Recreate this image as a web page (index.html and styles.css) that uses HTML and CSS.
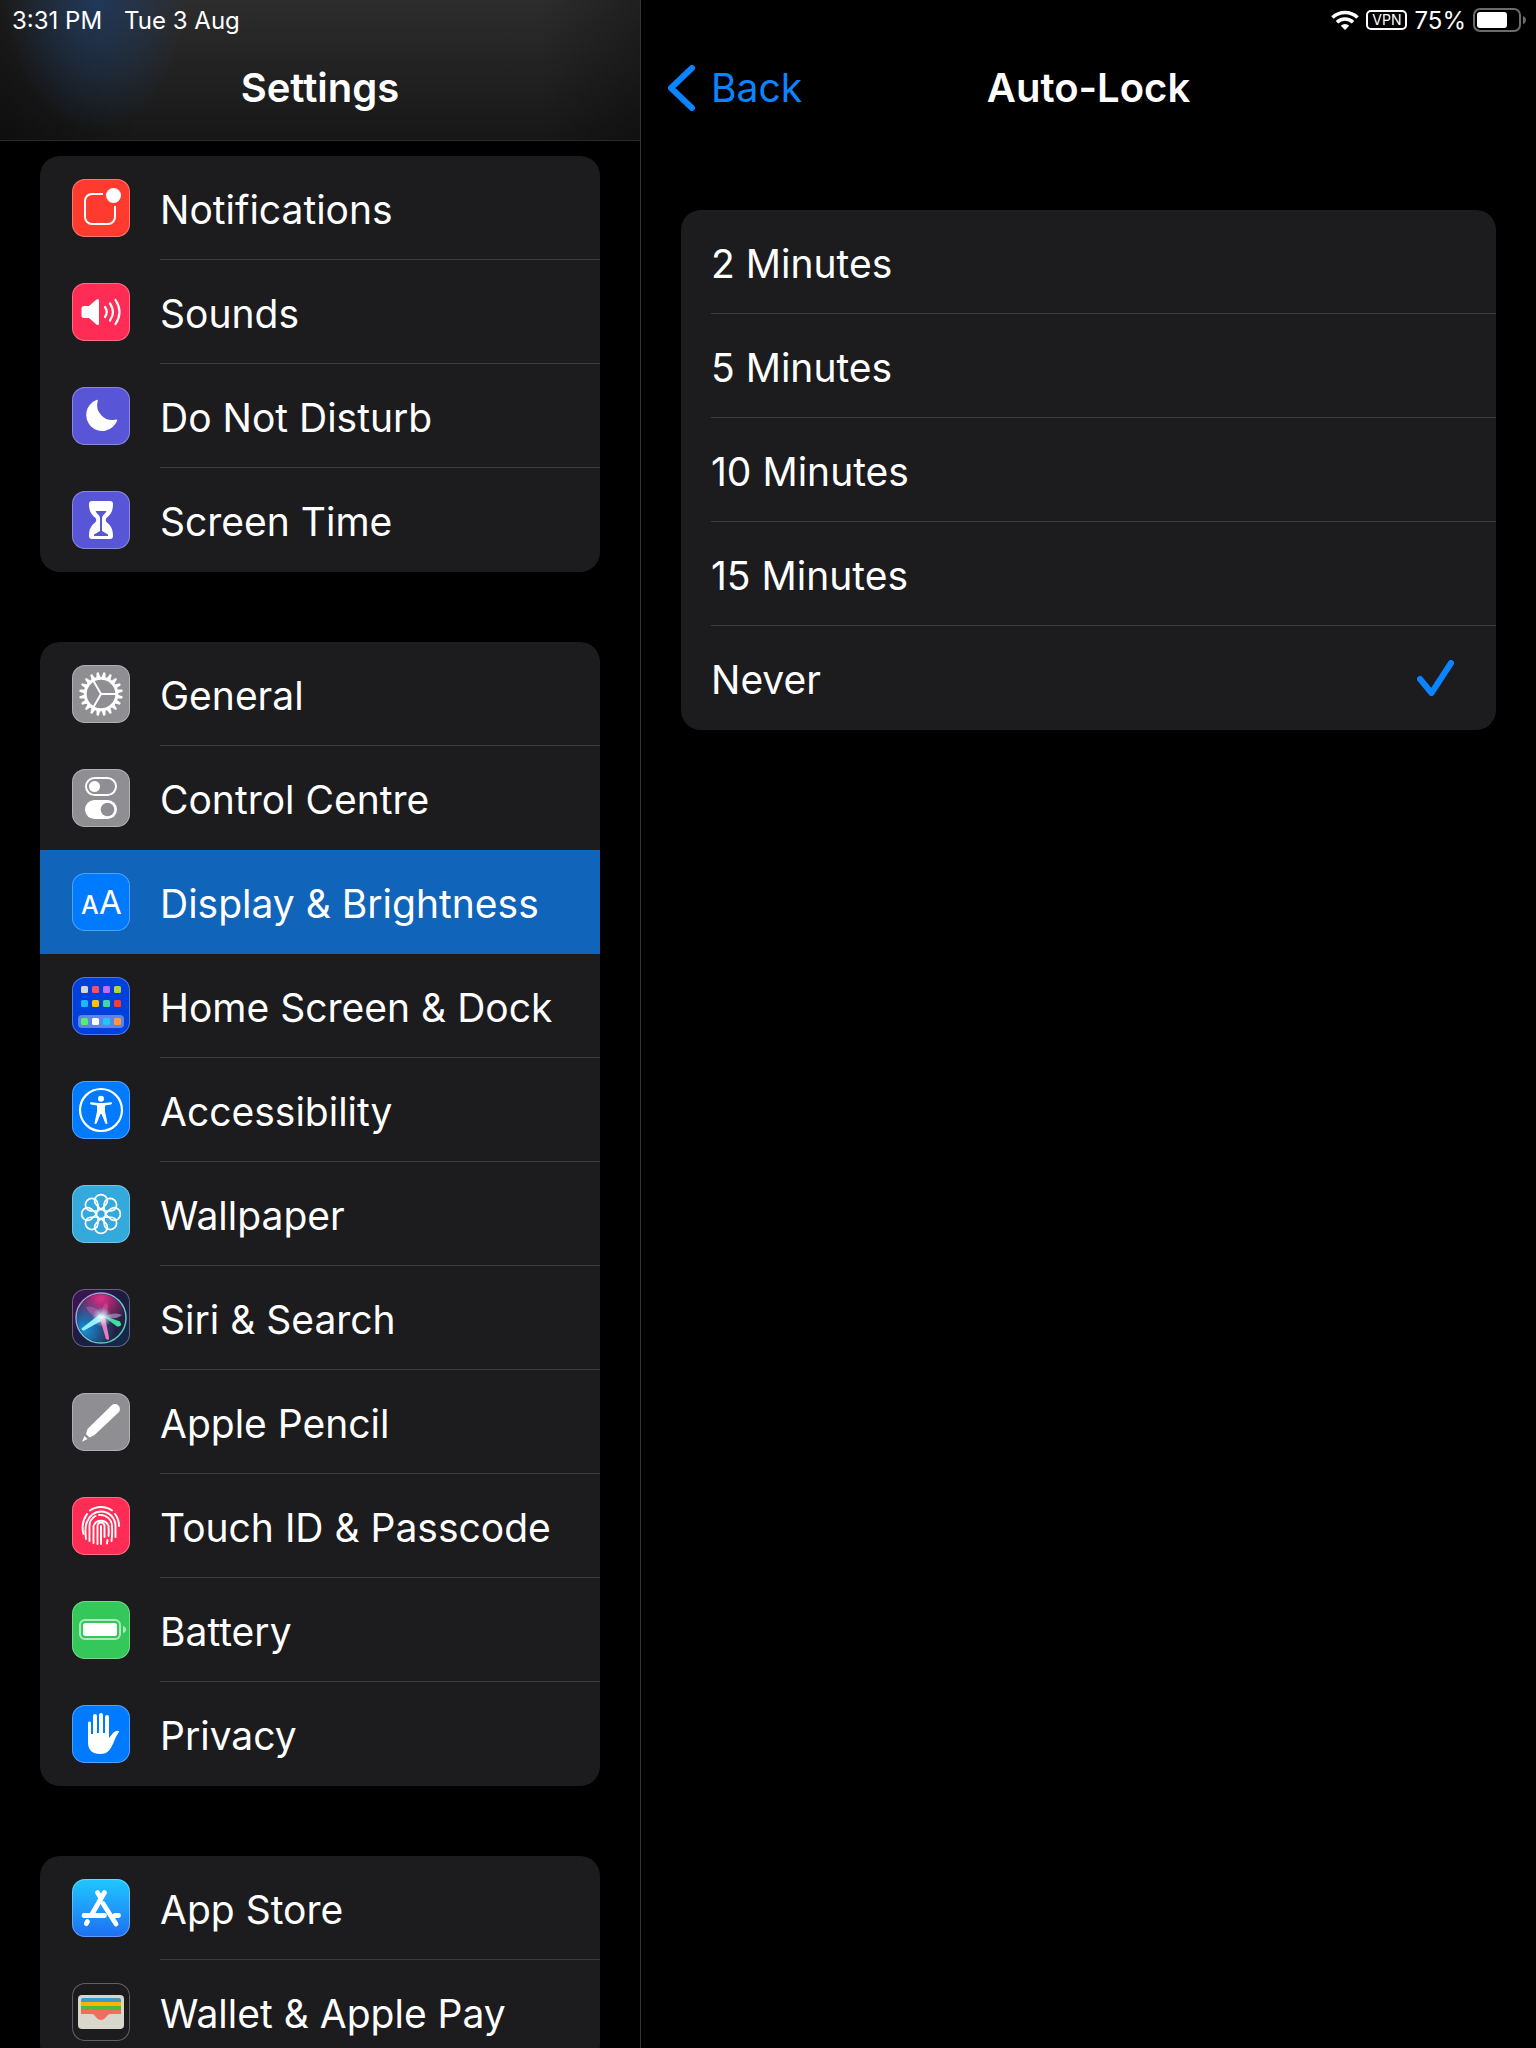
FILE: index.html
```html
<!DOCTYPE html>
<html lang="en">
<head>
    <meta charset="UTF-8">
    <meta name="viewport" content="width=device-width, initial-scale=1.0">
    <title>Settings</title>
    <link rel="stylesheet" href="styles.css">
</head>
<body>
    <div class="app">
        <aside class="sidebar">
            <header class="sidebar-header">
                <div class="status-bar">
                    <span>3:31 PM</span>
                    <span>Tue 3 Aug</span>
                </div>
                <h1 class="title">Settings</h1>
            </header>

            <nav class="menu">
                <ul class="group">
                    <li><a class="row" href="#notifications">
                        <svg class="icon red" viewBox="0 0 58 58">
                            <path d="M31 15H20a7 7 0 0 0-7 7v16a7 7 0 0 0 7 7h16a7 7 0 0 0 7-7V27" fill="none" stroke="#fff" stroke-width="2"/>
                            <circle cx="41.500" cy="16.500" r="7.500" fill="#fff"/>
                        </svg>
                        <span class="label">Notifications</span>
                    </a></li>
                    <li><a class="row" href="#sounds">
                        <svg class="icon pink" viewBox="0 0 58 58">
                            <path d="M12 23h5l7.500-6.500q2.500-1.500 2.500 1v23q0 2.500-2.500 1L17 35h-5q-2.500 0-2.500-2.500v-7Q9.500 23 12 23z" fill="#fff"/>
                            <g fill="none" stroke="#fff" stroke-width="2.200" stroke-linecap="round">
                                <path d="M33 24q3.500 5 0 10"/>
                                <path d="M38 20.500q6 8.500 0 17"/>
                                <path d="M43.500 17q8 12 0 24"/>
                            </g>
                        </svg>
                        <span class="label">Sounds</span>
                    </a></li>
                    <li><a class="row" href="#dnd">
                        <svg class="icon indigo" viewBox="0 0 58 58">
                            <path d="M24.500 13q1.600-.7 1.200 1A15 15 0 0 0 44 32.500q1.800-.3 1 1.500A16 16 0 1 1 24.500 13z" fill="#fff"/>
                        </svg>
                        <span class="label">Do Not Disturb</span>
                    </a></li>
                    <li><a class="row" href="#screentime">
                        <svg class="icon indigo" viewBox="0 0 58 58">
                            <path d="M20 10h18q3 0 3 3c0 8-3 11-6.500 14q-1.500 2 0 4C38 34 41 37 41 45q0 3-3 3H20q-3 0-3-3c0-8 3-11 6.500-14q1.500-2 0-4C20 24 17 21 17 13q0-3 3-3z" fill="#fff"/>
                            <path d="M23.500 20h11q-1 2.500-3.500 4.500-1 1.500-1 3V40l6 3.500v1.500H22v-1.500l6-3.500V27.500q0-1.500-1-3-2.500-2-3.500-4.500z" fill="#5856d6"/>
                        </svg>
                        <span class="label">Screen Time</span>
                    </a></li>
                </ul>

                <ul class="group">
                    <li><a class="row" href="#general">
                        <svg class="icon gray" viewBox="0 0 58 58" fill="none" stroke="#fff">
                            <defs><path id="tooth" d="M26.900 13l1-5.500q1.100-.8 2.200 0l1 5.500z"/></defs>
                            <circle cx="29" cy="29" r="15.800" stroke-width="3"/>
                            <g fill="#fff" stroke="none">
                                <use href="#tooth" transform="rotate(9 29 29)"/>
                                <use href="#tooth" transform="rotate(27 29 29)"/>
                                <use href="#tooth" transform="rotate(45 29 29)"/>
                                <use href="#tooth" transform="rotate(63 29 29)"/>
                                <use href="#tooth" transform="rotate(81 29 29)"/>
                                <use href="#tooth" transform="rotate(99 29 29)"/>
                                <use href="#tooth" transform="rotate(117 29 29)"/>
                                <use href="#tooth" transform="rotate(135 29 29)"/>
                                <use href="#tooth" transform="rotate(153 29 29)"/>
                                <use href="#tooth" transform="rotate(171 29 29)"/>
                                <use href="#tooth" transform="rotate(189 29 29)"/>
                                <use href="#tooth" transform="rotate(207 29 29)"/>
                                <use href="#tooth" transform="rotate(225 29 29)"/>
                                <use href="#tooth" transform="rotate(243 29 29)"/>
                                <use href="#tooth" transform="rotate(261 29 29)"/>
                                <use href="#tooth" transform="rotate(279 29 29)"/>
                                <use href="#tooth" transform="rotate(297 29 29)"/>
                                <use href="#tooth" transform="rotate(315 29 29)"/>
                                <use href="#tooth" transform="rotate(333 29 29)"/>
                                <use href="#tooth" transform="rotate(351 29 29)"/>
                            </g>
                            <path d="M44 29H29L21.500 16M29 29l-7.500 13" stroke-width="2"/>
                        </svg>
                        <span class="label">General</span>
                    </a></li>
                    <li><a class="row" href="#control">
                        <svg class="icon gray" viewBox="0 0 58 58">
                            <rect x="14" y="9" width="30" height="17" rx="8.500" fill="none" stroke="#fff" stroke-width="2"/>
                            <circle cx="22.500" cy="17.500" r="5.500" fill="#fff"/>
                            <rect x="13" y="31" width="32" height="19" rx="9.500" fill="#fff"/>
                            <circle cx="35.500" cy="40.500" r="6.800" fill="#8e8e93"/>
                        </svg>
                        <span class="label">Control Centre</span>
                    </a></li>
                    <li><a class="row selected" href="#display" aria-current="page">
                        <svg class="icon blue" viewBox="0 0 58 58" fill="#fff">
                            <text x="9" y="41" font-size="25" font-weight="500">A</text>
                            <text x="27" y="41" font-size="33">A</text>
                        </svg>
                        <span class="label">Display &amp; Brightness</span>
                    </a></li>
                    <li><a class="row" href="#home">
                        <svg class="icon navy" viewBox="0 0 58 58">
                            <rect x="6" y="38" width="46" height="13" rx="4" fill="#5e83ea"/>
                            <rect x="9" y="9" width="7" height="7" rx="1.500" fill="#d7d6cc"/>
                            <rect x="20" y="9" width="7" height="7" rx="1.500" fill="#ff4f63"/>
                            <rect x="31" y="9" width="7" height="7" rx="1.500" fill="#bf6dff"/>
                            <rect x="42" y="9" width="7" height="7" rx="1.500" fill="#b4d335"/>
                            <rect x="9" y="23" width="7" height="7" rx="1.500" fill="#1cb8ff"/>
                            <rect x="20" y="23" width="7" height="7" rx="1.500" fill="#ffc400"/>
                            <rect x="31" y="23" width="7" height="7" rx="1.500" fill="#3ed6a2"/>
                            <rect x="42" y="23" width="7" height="7" rx="1.500" fill="#fb3a2f"/>
                            <rect x="9" y="41" width="7" height="7" rx="1.500" fill="#54f06c"/>
                            <rect x="20" y="41" width="7" height="7" rx="1.500" fill="#fff"/>
                            <rect x="31" y="41" width="7" height="7" rx="1.500" fill="#1cc8ff"/>
                            <rect x="42" y="41" width="7" height="7" rx="1.500" fill="#ff9a3c"/>
                        </svg>
                        <span class="label">Home Screen &amp; Dock</span>
                    </a></li>
                    <li><a class="row" href="#accessibility">
                        <svg class="icon blue" viewBox="0 0 58 58">
                            <circle cx="29" cy="29" r="21" fill="none" stroke="#fff" stroke-width="2.200"/>
                            <circle cx="29" cy="17.800" r="3" fill="#fff"/>
                            <path d="M19 21.200l7 .9h6l7-.9q1 0 1 1t-1 1.200L33 24.500v6l2.500 11.500q0 1-1 1t-1.300-.9L29.500 33h-1L24.800 42.100q-.3.900-1.300.9t-1-1L25 30.500v-6l-6-1.100q-1-.2-1-1.200t1-1z" fill="#fff"/>
                        </svg>
                        <span class="label">Accessibility</span>
                    </a></li>
                    <li><a class="row" href="#wallpaper">
                        <svg class="icon cyan" viewBox="0 0 58 58" fill="none" stroke="#fff" stroke-width="1.700">
                            <defs><path id="petal" d="M29 24.500C26 22 22.600 19 22.600 16a6.400 6.400 0 0 1 12.800 0C35.400 19 32 22 29 24.500z"/></defs>
                            <circle cx="29" cy="29" r="4.500"/>
                            <use href="#petal"/>
                            <use href="#petal" transform="rotate(45 29 29)"/>
                            <use href="#petal" transform="rotate(90 29 29)"/>
                            <use href="#petal" transform="rotate(135 29 29)"/>
                            <use href="#petal" transform="rotate(180 29 29)"/>
                            <use href="#petal" transform="rotate(225 29 29)"/>
                            <use href="#petal" transform="rotate(270 29 29)"/>
                            <use href="#petal" transform="rotate(315 29 29)"/>
                        </svg>
                        <span class="label">Wallpaper</span>
                    </a></li>
                    <li><a class="row" href="#siri">
                        <svg class="icon siri" viewBox="0 0 58 58">
                            <defs>
                                <linearGradient id="ring" x1="0" y1="0" x2="1" y2="1">
                                    <stop offset="0" stop-color="#c58bd8"/>
                                    <stop offset=".5" stop-color="#6fc7d8"/>
                                    <stop offset="1" stop-color="#53c8a6"/>
                                </linearGradient>
                                <radialGradient id="orbPink" cx=".5" cy=".1" r=".6">
                                    <stop offset="0" stop-color="#e02f86"/>
                                    <stop offset="1" stop-color="#e02f86" stop-opacity="0"/>
                                </radialGradient>
                                <radialGradient id="orbBlue" cx=".15" cy=".75" r=".65">
                                    <stop offset="0" stop-color="#1a8fd8"/>
                                    <stop offset="1" stop-color="#1a8fd8" stop-opacity="0"/>
                                </radialGradient>
                                <radialGradient id="orbGlow">
                                    <stop offset="0" stop-color="#fff"/>
                                    <stop offset="1" stop-color="#a8f0ff" stop-opacity="0"/>
                                </radialGradient>
                            </defs>
                            <circle cx="29" cy="29" r="24" fill="#232044"/>
                            <circle cx="29" cy="29" r="24" fill="url(#orbPink)"/>
                            <circle cx="29" cy="29" r="24" fill="url(#orbBlue)"/>
                            <path d="M14 18q10-3 17 10 3 10-2 3Q17 26 14 18z" fill="#d86bb4" opacity=".45"/>
                            <path d="M30 28q0-14 5-14 3 6-3 16z" fill="#e65aa5" opacity=".5"/>
                            <path d="M30 28q14-6 20-2-6 5-20 3z" fill="#b8a6dc" opacity=".6"/>
                            <path d="M28 25L9.500 39.500q0 2.500 2.500 2L31 31z" fill="#8ff0ff"/>
                            <path d="M30 26l18 6.500q3 5.500-3 5z" fill="#42dfa0"/>
                            <path d="M28 30l6 20q3.500 2 3-1l-4-21z" fill="#f07ab8"/>
                            <circle cx="30" cy="28" r="10" fill="url(#orbGlow)"/>
                            <circle cx="29" cy="29" r="25" fill="none" stroke="url(#ring)" stroke-width="1.500"/>
                        </svg>
                        <span class="label">Siri &amp; Search</span>
                    </a></li>
                    <li><a class="row" href="#pencil">
                        <svg class="icon gray" viewBox="0 0 58 58" fill="#fff">
                            <path d="M39.500 12.500a4.800 4.800 0 0 1 7 7L22.500 42l-5 2.500-3.500-3.500 1.500-5z"/>
                            <path d="M12.500 43l3 3-5.500 2.800z"/>
                        </svg>
                        <span class="label">Apple Pencil</span>
                    </a></li>
                    <li><a class="row" href="#touchid">
                        <svg class="icon pink" viewBox="0 0 58 58" fill="none" stroke="#fff" stroke-width="1.900" stroke-linecap="round">
                            <path d="M18 13.500a19 19 0 0 1 22 0"/>
                            <path d="M11.500 37a24 24 0 0 1 3.500-20"/>
                            <path d="M43 17q4 5 4 12"/>
                            <path d="M14 42q-1.500-12 1-17A15 15 0 0 1 29 14.500 14.500 14.500 0 0 1 43.500 29v11"/>
                            <path d="M17.500 44v-15a11.500 11.500 0 0 1 6-10"/>
                            <path d="M27 18a11.500 11.500 0 0 1 13 11q.5 8-.5 15"/>
                            <path d="M21.500 46V29a8 8 0 0 1 15 0q.5 6 0 10"/>
                            <path d="M25.500 47V29a3.500 3.500 0 0 1 7 0v11"/>
                            <path d="M29 29v18M35.500 43l-.5 3.500M32 45"/>
                        </svg>
                        <span class="label">Touch ID &amp; Passcode</span>
                    </a></li>
                    <li><a class="row" href="#battery">
                        <svg class="icon green" viewBox="0 0 58 58">
                            <rect x="8" y="19" width="40" height="19" rx="5" fill="none" stroke="#aee9bd" stroke-width="2"/>
                            <rect x="11" y="22" width="34" height="13" rx="2.500" fill="#fff"/>
                            <path d="M51 25q3 1 3 3.500T51 32z" fill="#aee9bd"/>
                        </svg>
                        <span class="label">Battery</span>
                    </a></li>
                    <li><a class="row" href="#privacy">
                        <svg class="icon blue" viewBox="0 0 58 58">
                            <path d="M16 17.500a1.700 1.700 0 0 1 3 0V29h2V11a2 2 0 0 1 4 0v17h2V10a2 2 0 0 1 4 0v18h2V12a2 2 0 0 1 4 0v21l4-5q2.500-2.500 5-2.200 1.500.4 1 1.200-2 2.500-4 7-3 8-6 11.500-3 3.500-9 3.500Q16 49 16 37z" fill="#fff"/>
                        </svg>
                        <span class="label">Privacy</span>
                    </a></li>
                </ul>

                <ul class="group">
                    <li><a class="row" href="#appstore">
                        <svg class="icon store" viewBox="0 0 58 58" fill="none" stroke="#fff" stroke-width="4.800" stroke-linecap="round">
                            <path d="M32.500 13.500L19.500 36M12 36.500h20.500M43 36.500h3.500M15.500 42.500l-1.200 2.200"/>
                            <path d="M25.500 13.500l3 5M31 24.500l13 20.500"/>
                        </svg>
                        <span class="label">App Store</span>
                    </a></li>
                    <li><a class="row" href="#wallet">
                        <svg class="icon wallet" viewBox="0 0 58 58">
                            <rect x="6" y="12" width="46" height="34" rx="4" fill="#d9d6cb"/>
                            <path d="M9 19v-2q0-2 2-2h36q2 0 2 2v2z" fill="#3c9bc9"/>
                            <path d="M9 23v-4h40v4z" fill="#ffb300"/>
                            <path d="M9 27v-4h40v4z" fill="#4fba3f"/>
                            <path d="M9 27h40v4h-11q-2 0-3 2-3 4-6 4t-6-4q-1-2-3-2H9z" fill="#f26d5f"/>
                        </svg>
                        <span class="label">Wallet &amp; Apple Pay</span>
                    </a></li>
                </ul>
            </nav>
        </aside>

        <main class="detail">
            <header class="detail-header">
                <div class="status-bar status-right">
                    <svg class="wifi" viewBox="0 0 28 20" fill="none" stroke="#fff" stroke-width="3.600">
                        <path d="M1.500 7.500a18 18 0 0 1 25 0"/>
                        <path d="M6 12.200a11.500 11.500 0 0 1 16 0"/>
                        <path d="M14 20l-4.200-4.300a6 6 0 0 1 8.400 0z" fill="#fff" stroke="none"/>
                    </svg>
                    <span class="vpn">VPN</span>
                    <span>75%</span>
                    <svg class="battery" viewBox="0 0 54 24">
                        <rect x="1" y="1" width="46" height="22" rx="6" fill="none" stroke="#6b6b6b" stroke-width="2"/>
                        <rect x="4" y="4" width="30" height="16" rx="3" fill="#fff"/>
                        <path d="M50 8q3 1 3 4t-3 4z" fill="#6b6b6b"/>
                    </svg>
                </div>
                <div class="detail-nav">
                    <a class="back" href="#display">
                        <svg class="chevron" viewBox="0 0 28 48"><path d="M25 4L4 24l21 20" fill="none" stroke="#0a84ff" stroke-width="6" stroke-linecap="round" stroke-linejoin="round"/></svg>
                        Back
                    </a>
                    <h2 class="title">Auto-Lock</h2>
                </div>
            </header>

            <form class="group options">
                <label class="option"><span class="label">2 Minutes</span><input type="radio" name="autolock" value="2"></label>
                <label class="option"><span class="label">5 Minutes</span><input type="radio" name="autolock" value="5"></label>
                <label class="option"><span class="label">10 Minutes</span><input type="radio" name="autolock" value="10"></label>
                <label class="option"><span class="label">15 Minutes</span><input type="radio" name="autolock" value="15"></label>
                <label class="option"><span class="label">Never</span><input type="radio" name="autolock" value="never" checked>
                    <svg class="check" viewBox="0 0 38 36"><path d="M3 19l11.500 14L34 3" fill="none" stroke="#0a84ff" stroke-width="6" stroke-linecap="round" stroke-linejoin="round"/></svg>
                </label>
            </form>
        </main>
    </div>
</body>
</html>
```

FILE: styles.css
```css
* {
    margin: 0;
    padding: 0;
    box-sizing: border-box;
}

body {
    font-family: Inter, 'Liberation Sans', sans-serif;
    font-size: 39px;
    background: #000;
    color: #fff;
}

a {
    color: inherit;
    text-decoration: none;
}

ul {
    list-style: none;
}

.app {
    display: grid;
    grid-template-columns: 5fr 7fr;
    height: 100vh;
}

.sidebar {
    display: flex;
    flex-direction: column;
    min-width: 0;
    min-height: 0;
}

.sidebar-header {
    flex: none;
    border-bottom: 1px solid #2b2b2d;
    background:
        radial-gradient(ellipse 90px 130px at 15% 0, rgba(30, 62, 105, 0.75), rgba(30, 62, 105, 0)),
        linear-gradient(90deg, rgba(0, 0, 0, 0.4), rgba(0, 0, 0, 0) 22%, rgba(0, 0, 0, 0) 84%, rgba(0, 0, 0, 0.3)),
        linear-gradient(#2d2d2e, #171717);
}

.status-bar {
    display: flex;
    align-items: center;
    gap: 22px;
    height: 40px;
    padding: 0 12px;
    font-size: 24px;
}

.title {
    font-size: 40px;
    font-weight: 600;
    line-height: 48px;
    text-align: center;
}

.sidebar-header .title {
    padding: 24px 0 28px;
}

.menu {
    flex: 1;
    min-height: 0;
    overflow-y: auto;
    scrollbar-width: none;
    display: flex;
    flex-direction: column;
    gap: 70px;
    padding: 15px 40px 0;
}

.group {
    flex: none;
    background: #1c1c1e;
    border-radius: 20px;
    overflow: hidden;
}

.row {
    display: flex;
    align-items: center;
    gap: 30px;
    height: 104px;
    padding-left: 32px;
}

.row.selected {
    background: #1064ba;
}

.label {
    flex: 1;
    height: 104px;
    padding-top: 2px;
    line-height: 103px;
    white-space: nowrap;
    border-bottom: 1px solid #3d3d41;
}

li:last-child .label,
li:has(+ li .selected) .label,
.selected .label,
.option:last-child .label {
    border-bottom-color: transparent;
}

.icon {
    flex: none;
    width: 58px;
    height: 58px;
    border-radius: 13px;
    box-shadow: inset 0 0 0 1px rgba(255, 255, 255, 0.3);
}

.red {
    background: #ff3b30;
}

.pink {
    background: #ff2d55;
}

.indigo {
    background: #5856d6;
}

.gray {
    background: #8e8e93;
}

.blue {
    background: #007aff;
}

.navy {
    background: #0040dd;
}

.cyan {
    background: #34aadc;
}

.green {
    background: #34c759;
}

.siri {
    background: linear-gradient(135deg, #431257, #1c1c40 50%, #142a4c);
}

.store {
    background: linear-gradient(#1fc8ff, #1e6ff2);
}

.wallet {
    background: #1c1c1e;
}

.detail {
    border-left: 1px solid #353538;
    min-width: 0;
}

.status-right {
    justify-content: flex-end;
    gap: 7px;
    padding-right: 9px;
}

.wifi {
    width: 28px;
    height: 20px;
}

.vpn {
    height: 20px;
    padding: 0 4px;
    border: 2px solid #fff;
    border-radius: 5px;
    font-size: 14px;
    line-height: 16px;
}

.battery {
    width: 54px;
    height: 24px;
}

.detail-nav {
    display: grid;
    grid-template-columns: 1fr auto 1fr;
    align-items: center;
    padding: 24px 26px 28px;
}

.back {
    display: flex;
    align-items: center;
    gap: 16px;
    color: #0a84ff;
    line-height: 48px;
}

.chevron {
    width: 28px;
    height: 48px;
}

.options {
    margin: 70px 40px 0;
}

.option {
    display: flex;
    align-items: center;
    height: 104px;
    padding-left: 30px;
    position: relative;
}

.option input {
    appearance: none;
}

.check {
    position: absolute;
    right: 41px;
    width: 38px;
    height: 36px;
    pointer-events: none;
    display: none;
}

.option input:checked + .check {
    display: block;
}
```
